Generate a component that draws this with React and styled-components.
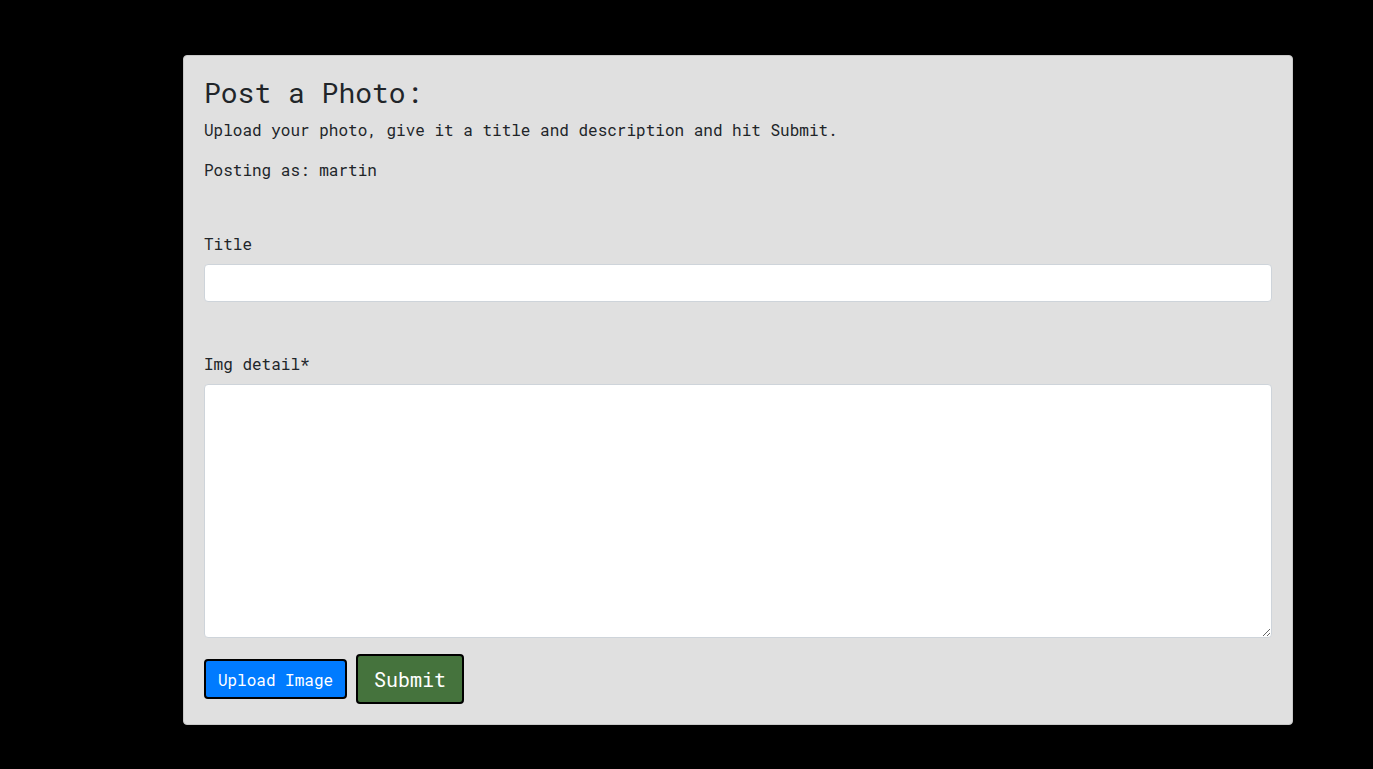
import React, { useState } from "react";
import styled, { createGlobalStyle } from "styled-components";

const GlobalStyle = createGlobalStyle`
  html, body {
    margin: 0;
    padding: 0;
    background: #000;
  }
  body {
    font-family: "Roboto Mono", "DejaVu Sans Mono", "Liberation Mono", monospace;
    color: #212529;
    min-height: 769px;
  }
`;

const App = () => {
  const [title, setTitle] = useState("");
  const [detail, setDetail] = useState("");

  return (
    <>
      <GlobalStyle />
      <Page>
        <Card>
          <Heading>Post a Photo:</Heading>
          <Text>Upload your photo, give it a title and description and hit Submit.</Text>
          <Text>Posting as: martin</Text>

          <FormGroup $top={50}>
            <Label htmlFor="title">Title</Label>
            <Input id="title" value={title} onChange={(e) => setTitle(e.target.value)} />
          </FormGroup>

          <FormGroup $top={50}>
            <Label htmlFor="detail">Img detail*</Label>
            <TextArea id="detail" value={detail} onChange={(e) => setDetail(e.target.value)} />
          </FormGroup>

          <ButtonRow>
            <Button $variant="upload">Upload Image</Button>
            <Button $variant="submit">Submit</Button>
          </ButtonRow>
        </Card>
      </Page>
    </>
  );
};

export default App;

// Styled Components
const Page = styled.div`
  padding: 55px 0 0 183px;
`;

const Card = styled.div`
  width: 1110px;
  box-sizing: border-box;
  background: #e0e0e0;
  border: 1px solid #c8c8c8;
  border-radius: 4px;
  padding: 20px;
  display: flex;
  flex-direction: column;
`;

const Heading = styled.h1`
  margin: 0 0 8px;
  font-size: 28px;
  font-weight: 450;
  line-height: 34px;
`;

const Text = styled.p`
  margin: 0 0 16px;
  font-size: 16px;
  line-height: 24px;
  &:last-of-type {
    margin-bottom: 0;
  }
`;

const FormGroup = styled.div`
  display: flex;
  flex-direction: column;
  margin-top: ${(props) => props.$top}px;
`;

const Label = styled.label`
  font-size: 16px;
  line-height: 24px;
  margin-bottom: 8px;
`;

const fieldStyles = `
  box-sizing: border-box;
  width: 100%;
  border: 1px solid #ced4da;
  border-radius: 4px;
  background: #fff;
  font-family: inherit;
  font-size: 16px;
  color: #495057;
  padding: 6px 12px;
  outline: none;
`;

const Input = styled.input`
  ${fieldStyles}
  height: 38px;
`;

const TextArea = styled.textarea`
  ${fieldStyles}
  height: 254px;
  display: block;
  resize: vertical;
`;

const ButtonRow = styled.div`
  display: flex;
  align-items: center;
  gap: 9px;
  margin-top: 16px;
`;

const Button = styled.button`
  box-sizing: border-box;
  border: 2px solid #000;
  border-radius: 4px;
  color: #fff;
  font-family: inherit;
  font-weight: 400;
  cursor: pointer;
  background: ${(props) => (props.$variant === "submit" ? "#45733d" : "#007bff")};
  font-size: ${(props) => (props.$variant === "submit" ? "20px" : "16px")};
  width: ${(props) => (props.$variant === "submit" ? "108px" : "143px")};
  height: ${(props) => (props.$variant === "submit" ? "50px" : "40px")};
  padding: 0;
`;
